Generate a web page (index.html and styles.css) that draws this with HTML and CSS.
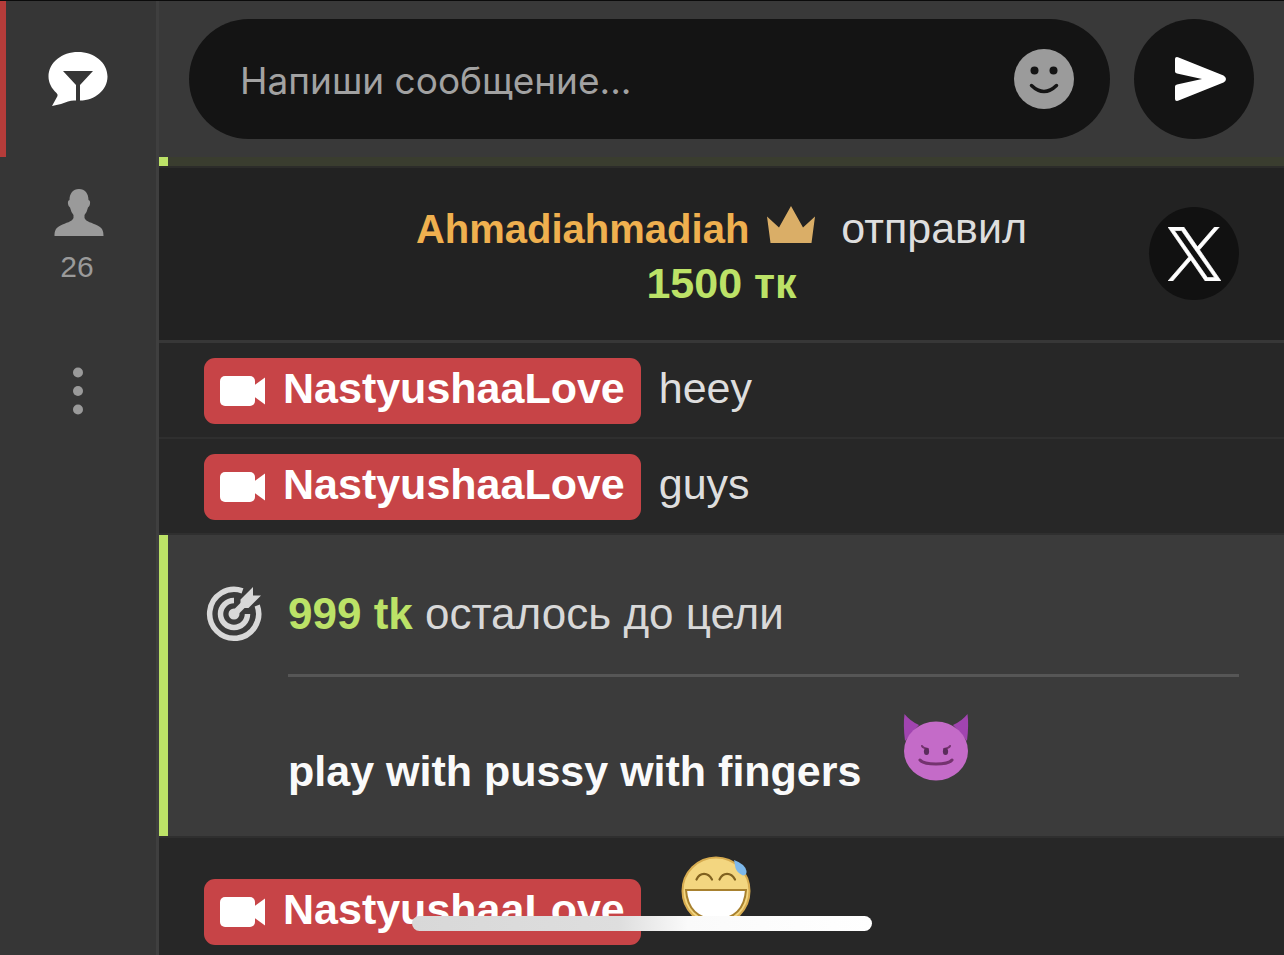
FILE: index.html
```html
<!DOCTYPE html>
<html lang="ru">
<head>
<meta charset="utf-8">
<meta name="viewport" content="width=device-width, initial-scale=1">
<title>Чат</title>
<link rel="stylesheet" href="styles.css">
</head>
<body>
<svg class="sprite" aria-hidden="true">
  <symbol id="camera" viewBox="0 0 46 30">
    <rect x="0" y="0" width="35" height="30" rx="5"/>
    <path d="M32 11 45 1.500V28.500L32 19Z"/>
  </symbol>
</svg>
<div class="app">
  <nav class="sidebar">
    <button class="tab tab-chat" type="button" aria-label="Чат">
      <svg width="60" height="56" viewBox="0 0 60 56">
        <path fill="#fff" d="M30 1C46 1 59.500 11.500 59.500 25.500 59.500 39 47 49.500 32 49.500V34L45 20H15L28 34V49.500Q24 49 20 50.500 12 54 4 55L9.500 45Q10 43.500 8.500 42C3.500 37.500 .5 31.500 .5 25.500 .5 11.500 14 1 30 1Z"/>
      </svg>
    </button>
    <button class="tab tab-users" type="button" aria-label="Зрители: 26">
      <svg width="50" height="48" viewBox="0 0 50 48">
        <path fill="#9a9a9a" d="M25 1C31 1 34.500 5.500 34.500 12Q36.500 12.500 36 16 35.500 19 34 19.500 33 24 30.500 27V30C32 34 38 34.500 43.500 37.500 48.500 40 49.500 43 49.500 48H.5C.5 43 1.500 40 6.500 37.500 12 34.500 18 34 19.500 30V27Q17 24 16 19.500 14.500 19 14 16 13.500 12.500 15.500 12C15.500 5.500 19 1 25 1Z"/>
      </svg>
      <span>26</span>
    </button>
    <button class="tab tab-more" type="button" aria-label="Ещё">
      <svg width="10" height="48" viewBox="0 0 10 48" fill="#9a9a9a">
        <circle cx="5" cy="5.500" r="5"/><circle cx="5" cy="24" r="5"/><circle cx="5" cy="42.500" r="5"/>
      </svg>
    </button>
  </nav>
  <main class="chat">
    <form class="composer">
      <div class="field">
        <input type="text" placeholder="Напиши сообщение..." aria-label="Напиши сообщение">
        <button class="smile" type="button" aria-label="Смайлы">
          <svg width="60" height="60" viewBox="0 0 60 60">
            <circle cx="30" cy="30" r="30" fill="#9b9b9b"/>
            <circle cx="20.500" cy="21.500" r="4" fill="#141414"/><circle cx="39.500" cy="21.500" r="4" fill="#141414"/>
            <path d="M17.500 36.500Q30 48.500 42.500 36.500" fill="none" stroke="#141414" stroke-width="3.500" stroke-linecap="round"/>
          </svg>
        </button>
      </div>
      <button class="send" type="button" aria-label="Отправить">
        <svg width="52" height="46" viewBox="0 0 52 46">
          <path fill="#fff" d="M1 3Q1 .5 4 1.200L49.500 19.500Q52 21 52 23T49.500 26.500L4 44.800Q1 45.500 1 43V30.500Q1 29 3 28.500L28 23 3 17.500Q1 17 1 15.500Z"/>
        </svg>
      </button>
    </form>
    <div class="progress"><div class="progress-value"></div></div>
    <section class="tip">
      <div class="tip-text">
        <div class="tip-line"><b class="tipper">Ahmadiahmadiah</b>
          <svg width="48" height="37" viewBox="0 0 48 37"><path fill="#daae67" d="M0 10.500 12 21.500 24 0 36 21.500 48 10.500 44.500 37H3.500Z"/></svg>
          <span>отправил</span></div>
        <b class="tokens">1500 тк</b>
      </div>
      <a class="social" href="#" aria-label="X">
        <svg width="53" height="54" viewBox="0 0 1200 1227" preserveAspectRatio="none">
          <path fill="#fff" stroke="#fff" stroke-width="16" d="M714 519 1161 0H1055L667 451 357 0H0L469 682 0 1227H106L516 750 843 1227H1200L714 519ZM569 688 521 620 144 80H307L612 516 660 584 1055 1150H892L569 688Z"/>
        </svg>
      </a>
    </section>
    <article class="message">
      <a class="badge" href="#"><svg class="camera"><use href="#camera"/></svg>NastyushaaLove</a>
      <span>heey</span>
    </article>
    <article class="message">
      <a class="badge" href="#"><svg class="camera"><use href="#camera"/></svg>NastyushaaLove</a>
      <span>guys</span>
    </article>
    <section class="goal">
      <svg class="target" width="60" height="60" viewBox="0 0 60 60" fill="none" stroke="#d8d8d8">
        <path stroke-width="5.500" d="M38.500 6.800A24.500 24.500 0 1 0 53.200 21.500"/>
        <path stroke-width="5.500" d="M30 16.500A13.500 13.500 0 1 0 43.500 30"/>
        <circle cx="30" cy="30" r="5.500" fill="#d8d8d8" stroke="none"/>
        <path stroke-width="6.500" d="M30 30 44 16"/>
        <path fill="#d8d8d8" stroke="none" d="M36.500 15.500 49 3V11.500H57L44.500 24H36.500Z"/>
      </svg>
      <div class="goal-body">
        <p class="goal-left"><b class="tokens">999 tk</b> осталось до цели</p>
        <div class="goal-title">
          <b>play with pussy with fingers</b>
          <svg width="66" height="68" viewBox="0 0 66 68">
            <path fill="#a144b0" d="M1.500 1Q7 8 16 12L2 28Q0 12 1.500 1ZM64.500 1Q59 8 50 12L64 28Q66 12 64.500 1Z"/>
            <ellipse cx="33" cy="38" rx="32" ry="29.500" fill="#c46bc8"/>
            <g fill="none" stroke="#74336f" stroke-linecap="round">
              <path stroke-width="2" d="M19 33Q20 35 25 36M47 33Q46 35 41 36"/>
              <path stroke-width="3" d="M17 47Q20 51 33 51T49 47"/>
            </g>
            <ellipse cx="23.500" cy="38.500" rx="2.600" ry="3.500" fill="#5b2c5c"/><ellipse cx="42.500" cy="38.500" rx="2.600" ry="3.500" fill="#5b2c5c"/>
          </svg>
        </div>
      </div>
    </section>
    <article class="message message-emoji">
      <a class="badge" href="#"><svg class="camera"><use href="#camera"/></svg>NastyushaaLove</a>
      <svg class="grin" width="70" height="70" viewBox="0 0 70 70">
        <circle cx="35" cy="35" r="33.500" fill="#f3d680" stroke="#d7ac50" stroke-width="2"/>
        <path d="M5 34H65Q63 62 35 64 7 62 5 34Z" fill="#fff" stroke="#a8812f" stroke-width="2"/>
        <path d="M15.500 23.500C19 16 27 16 31 23.500M38.500 23.500C42 16 50 16 54 23.500" fill="none" stroke="#80611f" stroke-width="2.200" stroke-linecap="round"/>
        <path d="M53 4Q64 8 65.500 15 66 19 62 19.500 56 17 54.500 12Z" fill="#7db8ea"/>
      </svg>
    </article>
  </main>
</div>
<div class="home-bar"></div>
</body>
</html>
```

FILE: styles.css
```css
* { box-sizing: border-box; }

body {
  margin: 0;
  height: 100vh;
  overflow: hidden;
  background: #272727;
  color: #dedede;
  font: 43px/54px "Liberation Sans", Arial, sans-serif;
}

button {
  padding: 0;
  border: 0;
  background: none;
  font: inherit;
  color: inherit;
}

svg { display: block; flex: none; }
a { text-decoration: none; }
p { margin: 0; }
.sprite { position: absolute; width: 0; height: 0; }

.app {
  display: flex;
  height: 100%;
  border-top: 1px solid #0b0b0b;
}

.sidebar {
  flex: none;
  width: 159px;
  display: flex;
  flex-direction: column;
  background: #363636;
  border-right: 3px solid #3f3f3f;
}

.tab {
  display: flex;
  flex-direction: column;
  align-items: center;
  justify-content: center;
  color: #9a9a9a;
}

.tab-chat {
  height: 156px;
  padding-right: 6px;
  border-left: 6px solid #b53c3a;
}

.tab-users {
  padding: 31px 0 0 2px;
  font-size: 30px;
  line-height: 36px;
  gap: 13px;
}

.tab-users span { padding-right: 4px; }
.tab-more { padding-top: 82px; }

.chat { flex: 1; min-width: 0; }

.composer {
  display: flex;
  gap: 24px;
  padding: 18px 30px;
  background: #393939;
}

.field {
  flex: 1;
  min-width: 0;
  display: flex;
  align-items: center;
  height: 120px;
  padding: 0 36px 0 51px;
  border-radius: 60px;
  background: #141414;
}

.field input {
  flex: 1;
  min-width: 0;
  padding: 4px 0 0;
  border: 0;
  outline: 0;
  background: none;
  color: #dedede;
  font: 37px/48px Inter, "Liberation Sans", sans-serif;
}

.field input::placeholder { color: #a2a2a2; opacity: 1; }

.send {
  display: flex;
  align-items: center;
  justify-content: center;
  width: 120px;
  padding-left: 12px;
  border-radius: 50%;
  background: #141414;
}

.progress {
  height: 11px;
  background: #3a3d2f;
  border-bottom: 2px solid #2c2c2a;
}

.progress-value { width: 9px; height: 9px; background: #bce267; }

.tip {
  display: grid;
  grid-template-columns: 1fr auto 1fr;
  align-items: center;
  padding: 33px 45px 30px;
  background: #222;
  border-bottom: 3px solid #373737;
}

.tip-text { grid-column: 2; text-align: center; }
.tip-line { display: flex; align-items: baseline; }
.tip-line svg { margin: 0 26px 2px 18px; }
.tipper { color: #efb04f; font-size: 40px; }
.tokens { color: #bce267; }

.social {
  justify-self: end;
  display: grid;
  place-items: center;
  width: 90px;
  height: 93px;
  margin-bottom: 4px;
  border-radius: 50%;
  background: #111;
}

.message {
  display: flex;
  gap: 18px;
  padding: 15px 45px 13px;
  line-height: 60px;
  border-bottom: 2px solid #2f2f2f;
}

.badge {
  display: flex;
  align-items: center;
  gap: 17px;
  padding: 0 16px 6px;
  border-radius: 11px;
  background: #c74447;
  color: #fff;
  font-weight: bold;
}

.camera { width: 46px; height: 30px; margin-top: 6px; fill: #fff; }

.message-emoji { align-items: flex-end; gap: 40px; }
.grin { margin: 3px 0 19px; }

.goal {
  display: flex;
  gap: 24px;
  padding: 52px 45px 38px 36px;
  background: #3b3b3b;
  border-left: 9px solid #bce267;
  color: #d8d8d8;
}

.target { margin-top: -3px; }
.goal-body { flex: 1; min-width: 0; }

.goal-left {
  padding-bottom: 33px;
  border-bottom: 3px solid #565656;
  font-size: 44px;
}

.goal-title {
  display: flex;
  align-items: flex-end;
  gap: 42px;
  padding-top: 36px;
  color: #fafafa;
}

.goal-title svg { margin-bottom: 17px; }
.goal + .message { border-top: 2px solid #2f2f2f; }

.home-bar {
  position: absolute;
  left: 50%;
  bottom: 24px;
  width: 460px;
  height: 15px;
  margin-left: -230px;
  border-radius: 8px;
  background: linear-gradient(90deg, #d8d8d8, #dedede 45%, #fafafa 60%, #fff);
}
```
